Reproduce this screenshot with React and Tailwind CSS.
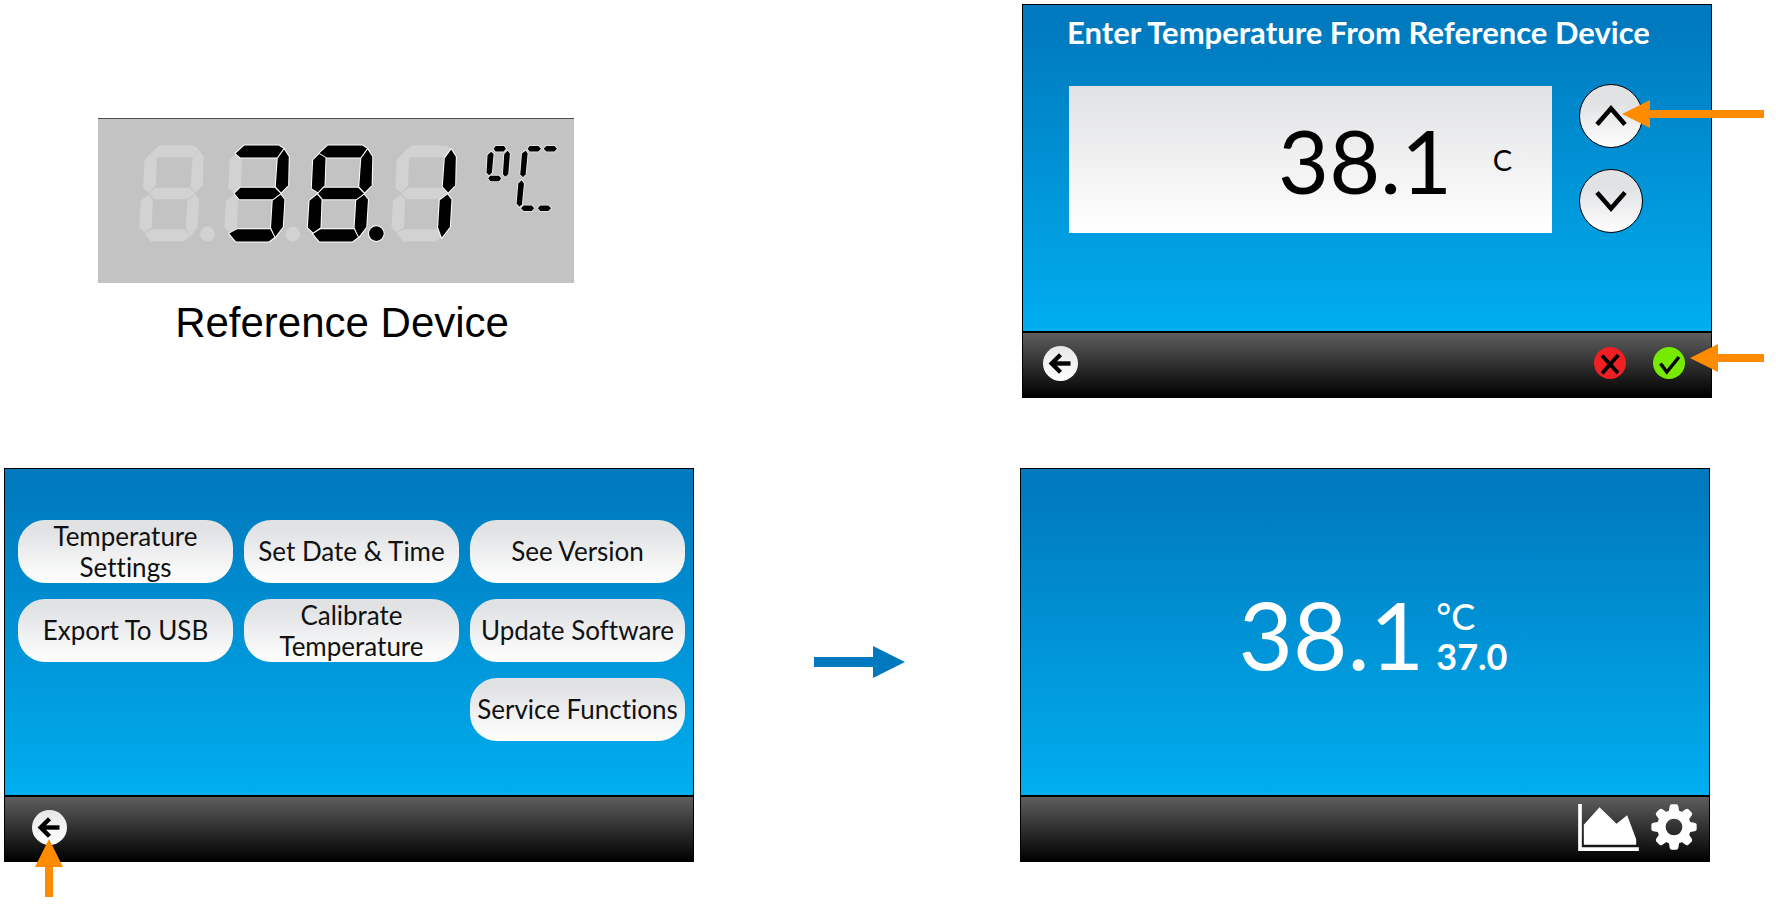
import React from "react";

const SEGMENTS = {
  a: "686,130 712,106 815,106 830,116 812,142 700,142",
  b: "831,118 845,140 843,225 822,247 806,230 812,145",
  c: "820,253 832,268 827,350 803,382 792,352 797,270",
  d: "667,370 690,357 790,357 802,381 785,394 687,394",
  e: "680,253 693,268 690,352 668,367 652,352 657,272",
  f: "686,132 705,143 702,225 683,247 664,235 668,150",
  g: "683,250 700,233 803,233 820,250 797,267 697,267",
};

const UNIT_SEGMENTS = [
  "1208,116 1214,108 1239,108 1245,116 1238,124 1214,124",
  "1201,125 1208,132 1203,188 1195,195 1187,188 1190,135",
  "1250,122 1257,130 1252,192 1243,200 1236,192 1240,132",
  "1192,205 1198,197 1224,197 1231,205 1224,213 1199,213",
  "1310,116 1316,108 1342,108 1350,116 1342,124 1316,124",
  "1358,116 1366,108 1390,108 1398,116 1390,124 1366,124",
  "1304,122 1310,130 1304,192 1296,201 1288,192 1293,130",
  "1292,210 1299,220 1293,282 1285,290 1277,280 1282,220",
  "1290,294 1298,286 1322,286 1330,294 1322,302 1298,302",
  "1340,294 1348,286 1372,286 1380,294 1372,302 1348,302",
];

const DIGITS = [
  { x: -505, lit: "", dot: "off" },
  { x: -250, lit: "abcdg", dot: "off" },
  { x: 0, lit: "abcdefg", dot: "on" },
  { x: 250, lit: "bc", dot: "none" },
];

function Digit({ x, lit, dot }) {
  const names = Object.keys(SEGMENTS);
  return (
    <g transform={`translate(${x} 0)`} strokeLinejoin="round">
      {names
        .filter((n) => !lit.includes(n))
        .map((n) => (
          <polygon key={n} points={SEGMENTS[n]} fill="#d2d2d2" />
        ))}
      {names
        .filter((n) => lit.includes(n))
        .map((n) => (
          <polygon key={n} points={SEGMENTS[n]} fill="#000" stroke="#fff" strokeWidth="6" paintOrder="stroke" />
        ))}
      {dot === "off" && <circle cx="857" cy="371" r="22" fill="#d2d2d2" />}
      {dot === "on" && <circle cx="857" cy="370" r="22" fill="#000" stroke="#fff" strokeWidth="6" paintOrder="stroke" />}
    </g>
  );
}

function ReferenceDevice() {
  return (
    <figure className="ml-[94px] w-[69%] pt-[114px]">
      <div className="border-t border-[#505050] bg-[#c3c3c3]">
        <svg viewBox="24 27 1425 492" className="block w-full" role="img" aria-label="38.1 °C">
          {DIGITS.map((d) => (
            <Digit key={d.x} {...d} />
          ))}
          {UNIT_SEGMENTS.map((p) => (
            <polygon key={p} points={p} fill="#000" stroke="#eee" strokeWidth="5" strokeLinejoin="round" paintOrder="stroke" />
          ))}
        </svg>
      </div>
      <figcaption className="pt-4 pl-3 text-center font-['Liberation_Sans',Arial,sans-serif] text-[42px] leading-[48px] text-black">
        Reference Device
      </figcaption>
    </figure>
  );
}

function Panel({ children, footer, label }) {
  return (
    <section aria-label={label} className="relative flex flex-col border border-black">
      <div className="flex min-h-[326px] flex-col bg-linear-to-b/srgb from-[#0079be] from-5% to-[#00aeef]">
        {children}
      </div>
      <footer className="flex h-[66px] items-center border-t-2 border-black bg-linear-to-b/srgb from-[#5e5e5e] to-black pb-1">
        {footer}
      </footer>
    </section>
  );
}

function BackButton() {
  return (
    <button
      type="button"
      aria-label="Back"
      className="size-[35px] rounded-full bg-linear-to-b/srgb from-[#e6e7e8] to-white"
    >
      <svg viewBox="0 0 35 35" className="size-full" fill="none" stroke="#000" strokeWidth="4.4">
        <path d="M27.5 17.5H8" />
        <path d="M17.5 8.7 8.7 17.5l8.8 8.8" />
      </svg>
    </button>
  );
}

function StepButton({ label, path }) {
  return (
    <button
      type="button"
      aria-label={label}
      className="size-16 rounded-full border border-black bg-linear-to-b/srgb from-[#e1e2e4] from-30% to-white"
    >
      <svg viewBox="0 0 62 62" className="size-full" fill="none" stroke="#000" strokeWidth="4.6">
        <path d={path} />
      </svg>
    </button>
  );
}

function OrangeArrow({ length, className }) {
  return (
    <svg width={length} height="28" viewBox={`0 0 ${length} 28`} className={className} aria-hidden="true">
      <path d={`M0 14 28 0V10H${length}V18H28V28Z`} fill="#ff8c00" />
    </svg>
  );
}

function EnterTemperature() {
  return (
    <Panel
      label="Enter temperature"
      footer={
        <div className="flex flex-1 items-center pr-[26px] pl-5">
          <BackButton />
          <button type="button" aria-label="Cancel" className="mr-[27px] ml-auto size-8 rounded-full bg-[#ee2024]">
            <svg viewBox="0 0 32 32" className="size-full" fill="none" stroke="#000" strokeWidth="3.8">
              <path d="M8 8.5 24 26M24.3 8 8 26.5" />
            </svg>
          </button>
          <button type="button" aria-label="Confirm" className="size-8 rounded-full bg-[#76ea00]">
            <svg viewBox="0 0 32 32" className="size-full" fill="none" stroke="#000" strokeWidth="3.4">
              <path d="M7.5 16.5 13.8 25 26 10" />
            </svg>
          </button>
        </div>
      }
    >
      <h1 className="pt-2 pl-11 text-[31px] leading-[38px] font-bold text-white">
        Enter Temperature From Reference Device
      </h1>
      <div className="flex items-end gap-[27px] pt-[33px] pr-[68px] pl-[46px]">
        <div className="flex h-[147px] flex-1 items-center bg-linear-to-b/srgb from-[#e1e2e4] to-white pr-10">
          <input
            readOnly
            aria-label="Reference temperature"
            defaultValue="38.1"
            className="h-full w-0 flex-1 bg-transparent text-right text-[88px] text-black outline-none"
          />
          <span className="w-[60px] text-right text-[29px] text-black">C</span>
        </div>
        <div className="flex flex-col gap-[21px]">
          <StepButton label="Increase" path="M17 39.5 31 23.5 45 39.5" />
          <StepButton label="Decrease" path="M17 22.5 31 38.5 45 22.5" />
        </div>
      </div>
      <OrangeArrow length={142} className="absolute top-[95px] -right-[53px]" />
      <OrangeArrow length={74} className="absolute top-[339px] -right-[53px]" />
    </Panel>
  );
}

const MENU = [
  "Temperature Settings",
  "Set Date & Time",
  "See Version",
  "Export To USB",
  "Calibrate Temperature",
  "Update Software",
  "Service Functions",
];

function SettingsMenu() {
  return (
    <Panel
      label="Settings"
      footer={
        <div className="flex pl-[27px]">
          <BackButton />
        </div>
      }
    >
      <nav className="grid grid-cols-3 gap-x-[11px] gap-y-4 pt-[51px] pr-2 pl-[13px]">
        {MENU.map((item) => (
          <button
            key={item}
            type="button"
            className="flex h-[63px] items-center justify-center rounded-[27px] bg-linear-to-b/srgb from-[#e1e2e4] from-15% to-white px-1 text-center text-[26px] leading-[31px] text-[#111] last:col-start-3"
          >
            {item}
          </button>
        ))}
      </nav>
      <svg width="28" height="58" viewBox="0 0 28 58" className="absolute top-[370px] left-[30px]" aria-hidden="true">
        <path d="M14 0 28 28H18V58H10V28H0Z" fill="#ff8c00" />
      </svg>
    </Panel>
  );
}

function Monitor() {
  return (
    <Panel
      label="Monitor"
      footer={
        <div className="flex flex-1 items-center justify-end gap-3 pr-3">
          <button type="button" aria-label="Chart">
            <svg viewBox="115 72 182 141" className="h-[47px] w-[61px]" fill="#fff">
              <path d="M115 72h11v130h171v11H115Z" />
              <path d="M132 134 179 82 230 131 262 106 289 178V194H132Z" />
            </svg>
          </button>
          <button type="button" aria-label="Settings">
            <svg viewBox="-69 -69 138 138" className="size-[46px]" fill="#fff">
              <circle r="38" fill="none" stroke="#fff" strokeWidth="26" />
              {[0, 45, 90, 135, 180, 225, 270, 315].map((a) => (
                <path key={a} d="M-16 -44 -13 -62Q-12 -68 -7 -68H7Q12 -68 13 -62L16 -44Z" transform={`rotate(${a})`} />
              ))}
            </svg>
          </button>
        </div>
      }
    >
      <div className="flex items-center justify-center gap-3 pt-[109px] pl-4 text-white">
        <span className="text-[94px] leading-[112px]">38.1</span>
        <div className="flex flex-col pt-1 text-[36px] leading-[40px] font-bold">
          <span className="font-medium">°C</span>
          <span>37.0</span>
        </div>
      </div>
    </Panel>
  );
}

export default function App() {
  return (
    <main className="flex flex-col gap-[70px] bg-white pt-1 pb-[43px] pl-1 font-[Lato,'Open_Sans',sans-serif] [font-variant-ligatures:none]">
      <div className="grid grid-cols-[690fr_328fr_690fr] items-start pr-16">
        <ReferenceDevice />
        <div />
        <EnterTemperature />
      </div>
      <div className="grid grid-cols-[690fr_326fr_690fr] items-start pr-[66px]">
        <SettingsMenu />
        <div className="flex self-center pb-1.5 pl-[120px]">
          <svg width="91" height="32" viewBox="0 0 91 32" aria-hidden="true">
            <path d="M0 11H59V0L91 16 59 32V21H0Z" fill="#0079be" />
          </svg>
        </div>
        <Monitor />
      </div>
    </main>
  );
}
